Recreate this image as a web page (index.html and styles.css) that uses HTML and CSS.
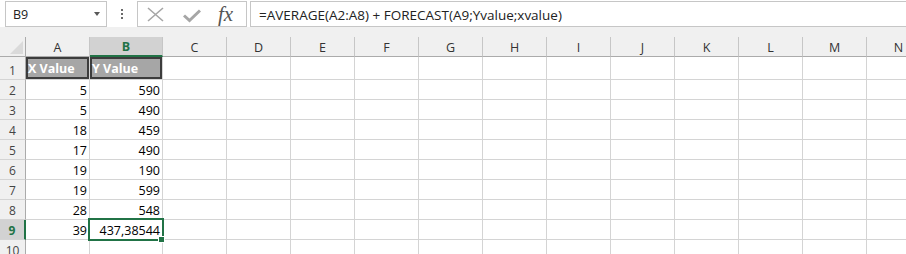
FILE: index.html
```html
<!doctype html>
<html lang="en">

<head>
  <meta charset="UTF-8">
  <title>Forecast sheet</title>
  <link rel="stylesheet" href="styles.css">
</head>

<body>
  <!-- Formula bar -->
  <div class="formula-bar">
    <div class="name-box">
      <span class="name-value">B9</span>
      <span class="caret"></span>
    </div>
    <div class="grip"><i></i><i></i><i></i></div>
    <div class="fx-buttons">
      <svg class="icon-cancel" width="17" height="15" viewBox="0 0 17 15">
        <path d="M1 1 L16 14 M16 1 L1 14" />
      </svg>
      <svg class="icon-enter" width="18" height="14" viewBox="0 0 18 14">
        <path d="M1 6.5 L6.5 11.5 L17 1.5" />
      </svg>
      <span class="fx">fx</span>
    </div>
    <div class="formula-input">=AVERAGE(A2:A8) + FORECAST(A9;Yvalue;xvalue)</div>
  </div>

  <!-- Sheet grid -->
  <div class="sheet">
    <div class="corner"><span class="corner-mark"></span></div>
    <div class="col-head">A</div>
    <div class="col-head is-active">B</div>
    <div class="col-head">C</div>
    <div class="col-head">D</div>
    <div class="col-head">E</div>
    <div class="col-head">F</div>
    <div class="col-head">G</div>
    <div class="col-head">H</div>
    <div class="col-head">I</div>
    <div class="col-head">J</div>
    <div class="col-head">K</div>
    <div class="col-head">L</div>
    <div class="col-head">M</div>
    <div class="col-head">N</div>

    <!-- row 1 -->
    <div class="row-head">1</div>
    <div class="cell label">X Value</div>
    <div class="cell label">Y Value</div>
    <div class="cell"></div><div class="cell"></div><div class="cell"></div><div class="cell"></div>
    <div class="cell"></div><div class="cell"></div><div class="cell"></div><div class="cell"></div>
    <div class="cell"></div><div class="cell"></div><div class="cell"></div><div class="cell"></div>

    <!-- row 2 -->
    <div class="row-head">2</div>
    <div class="cell num">5</div>
    <div class="cell num">590</div>
    <div class="cell"></div><div class="cell"></div><div class="cell"></div><div class="cell"></div>
    <div class="cell"></div><div class="cell"></div><div class="cell"></div><div class="cell"></div>
    <div class="cell"></div><div class="cell"></div><div class="cell"></div><div class="cell"></div>

    <!-- row 3 -->
    <div class="row-head">3</div>
    <div class="cell num">5</div>
    <div class="cell num">490</div>
    <div class="cell"></div><div class="cell"></div><div class="cell"></div><div class="cell"></div>
    <div class="cell"></div><div class="cell"></div><div class="cell"></div><div class="cell"></div>
    <div class="cell"></div><div class="cell"></div><div class="cell"></div><div class="cell"></div>

    <!-- row 4 -->
    <div class="row-head">4</div>
    <div class="cell num">18</div>
    <div class="cell num">459</div>
    <div class="cell"></div><div class="cell"></div><div class="cell"></div><div class="cell"></div>
    <div class="cell"></div><div class="cell"></div><div class="cell"></div><div class="cell"></div>
    <div class="cell"></div><div class="cell"></div><div class="cell"></div><div class="cell"></div>

    <!-- row 5 -->
    <div class="row-head">5</div>
    <div class="cell num">17</div>
    <div class="cell num">490</div>
    <div class="cell"></div><div class="cell"></div><div class="cell"></div><div class="cell"></div>
    <div class="cell"></div><div class="cell"></div><div class="cell"></div><div class="cell"></div>
    <div class="cell"></div><div class="cell"></div><div class="cell"></div><div class="cell"></div>

    <!-- row 6 -->
    <div class="row-head">6</div>
    <div class="cell num">19</div>
    <div class="cell num">190</div>
    <div class="cell"></div><div class="cell"></div><div class="cell"></div><div class="cell"></div>
    <div class="cell"></div><div class="cell"></div><div class="cell"></div><div class="cell"></div>
    <div class="cell"></div><div class="cell"></div><div class="cell"></div><div class="cell"></div>

    <!-- row 7 -->
    <div class="row-head">7</div>
    <div class="cell num">19</div>
    <div class="cell num">599</div>
    <div class="cell"></div><div class="cell"></div><div class="cell"></div><div class="cell"></div>
    <div class="cell"></div><div class="cell"></div><div class="cell"></div><div class="cell"></div>
    <div class="cell"></div><div class="cell"></div><div class="cell"></div><div class="cell"></div>

    <!-- row 8 -->
    <div class="row-head">8</div>
    <div class="cell num">28</div>
    <div class="cell num">548</div>
    <div class="cell"></div><div class="cell"></div><div class="cell"></div><div class="cell"></div>
    <div class="cell"></div><div class="cell"></div><div class="cell"></div><div class="cell"></div>
    <div class="cell"></div><div class="cell"></div><div class="cell"></div><div class="cell"></div>

    <!-- row 9 (active) -->
    <div class="row-head is-active">9</div>
    <div class="cell num">39</div>
    <div class="cell num is-selected">437,38544</div>
    <div class="cell"></div><div class="cell"></div><div class="cell"></div><div class="cell"></div>
    <div class="cell"></div><div class="cell"></div><div class="cell"></div><div class="cell"></div>
    <div class="cell"></div><div class="cell"></div><div class="cell"></div><div class="cell"></div>

    <!-- row 10 -->
    <div class="row-head">10</div>
    <div class="cell"></div><div class="cell"></div>
    <div class="cell"></div><div class="cell"></div><div class="cell"></div><div class="cell"></div>
    <div class="cell"></div><div class="cell"></div><div class="cell"></div><div class="cell"></div>
    <div class="cell"></div><div class="cell"></div><div class="cell"></div><div class="cell"></div>
  </div>
</body>

</html>
```

FILE: styles.css
```css
html,
body {
  margin: 0;
  height: 100%;
  overflow: hidden;
  background-color: #fff;
}

body {
  font-family: "Open Sans", sans-serif;
}

/* Formula bar */

.formula-bar {
  display: flex;
  height: 27px;
  padding-top: 1px;
  box-sizing: border-box;
}

.name-box {
  width: 102px;
  margin-left: 5px;
  box-sizing: border-box;
  border: 1px solid #c6c6c6;
  display: flex;
  align-items: center;
  justify-content: space-between;
  padding: 0 6px 0 7px;
  font-size: 12.5px;
  color: #222;
}

.caret {
  width: 0;
  height: 0;
  border-left: 3.5px solid transparent;
  border-right: 3.5px solid transparent;
  border-top: 4px solid #595959;
}

.grip {
  width: 30px;
  display: flex;
  flex-direction: column;
  align-items: center;
  justify-content: center;
  gap: 2px;
}

.grip i {
  width: 2px;
  height: 2px;
  background-color: #6a6a6a;
}

.fx-buttons {
  width: 110px;
  box-sizing: border-box;
  border: 1px solid #c6c6c6;
  display: flex;
  align-items: center;
  padding-left: 9px;
}

.icon-cancel path {
  fill: none;
  stroke: #a6a6a6;
  stroke-width: 1.6;
}

.icon-enter {
  margin-left: 19px;
  margin-top: 4px;
}

.icon-enter path {
  fill: none;
  stroke: #a6a6a6;
  stroke-width: 3;
}

.fx {
  margin-left: 17px;
  font-family: "Liberation Serif", serif;
  font-style: italic;
  font-size: 21px;
  color: #555;
  line-height: 1;
}

.formula-input {
  flex: 1;
  margin-left: 3px;
  margin-right: -4px;
  border: 1px solid #c6c6c6;
  display: flex;
  align-items: center;
  padding: 1px 0 0 8px;
  font-size: 13.5px;
  color: #222;
  white-space: nowrap;
}

/* Sheet grid */

.sheet {
  display: grid;
  grid-template-columns: 26px 64px 73px repeat(12, 64px);
  grid-template-rows: 20px 23px repeat(8, 20px) 20px;
  padding-top: 10px;
  background-color: #f0f0f0;
}

.corner {
  background-color: #f0f0f0;
  border-right: 1px solid #ababab;
  border-bottom: 1px solid #ababab;
  display: flex;
  justify-content: flex-end;
  align-items: flex-end;
  padding: 0 2px 2px 0;
}

.corner-mark {
  width: 13px;
  height: 13px;
  background-color: #dadada;
  clip-path: polygon(100% 0, 100% 100%, 0 100%);
}

.col-head {
  background-color: #f0f0f0;
  border-right: 1px solid #c6c6c6;
  border-bottom: 1px solid #ababab;
  display: flex;
  align-items: flex-end;
  justify-content: center;
  font-size: 12.5px;
  line-height: 17px;
  color: #333;
}

.col-head.is-active {
  background-color: #d2d2d2;
  border-bottom: 2px solid #217346;
  color: #217346;
  font-weight: 700;
}

.row-head {
  background-color: #f0f0f0;
  border-right: 1px solid #ababab;
  border-bottom: 1px solid #d4d4d4;
  display: flex;
  align-items: flex-end;
  justify-content: center;
  font-size: 12px;
  line-height: 16px;
  color: #444;
}

.row-head.is-active {
  background-color: #d2d2d2;
  border-right: 2px solid #217346;
  color: #217346;
  font-weight: 700;
}

.cell {
  box-sizing: border-box;
  background-color: #fff;
  border-right: 1px solid #d4d4d4;
  border-bottom: 1px solid #d4d4d4;
  display: flex;
  align-items: flex-end;
  padding: 0 2px;
  font-size: 12.5px;
  line-height: 16px;
  color: #000;
  white-space: nowrap;
  overflow: visible;
}

.num {
  justify-content: flex-end;
}

.label {
  background-color: #a6a6a6;
  box-shadow: inset 0 0 0 2px #3c3c3c;
  color: #fff;
  font-weight: 700;
  padding-bottom: 2px;
}

/* Active cell outline with fill handle */

.is-selected {
  position: relative;
}

.is-selected::after {
  content: "";
  position: absolute;
  left: -2px;
  top: -2px;
  right: -2px;
  bottom: -2px;
  border: 2px solid #217346;
}

.is-selected::before {
  content: "";
  position: absolute;
  right: -3px;
  bottom: -4px;
  width: 5px;
  height: 5px;
  background-color: #217346;
  border: 1px solid #fff;
  z-index: 1;
}
```
